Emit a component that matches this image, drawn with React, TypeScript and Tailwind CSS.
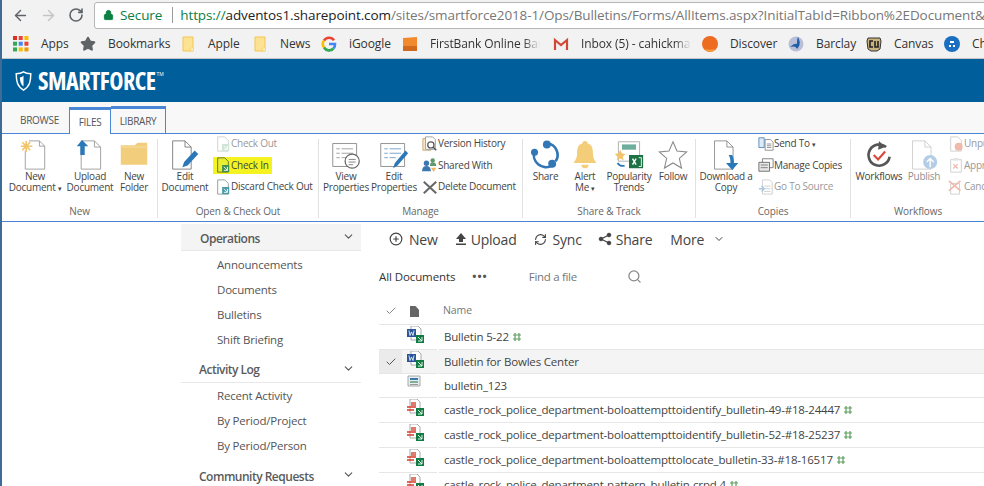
import { ArrowLeft, ArrowRight, ChevronDown, RotateCw, Lock, Star, Search, Check, CirclePlus, RefreshCw } from "lucide-react";

function BigIcon({ kind }: { kind: string }) {
  const box = "w-[30px] h-[30px]";
  switch (kind) {
    case "new":
      return (
        <svg viewBox="0 0 34 34" className={box} fill="none">
          <path d="M10 1h12l6 6v26H6V12" fill="#fff" stroke="#999" />
          <path d="M22 1v6h6" stroke="#999" />
          <path d="M7 1v13M1 7h13M2.5 2.5l9 9M11.5 2.5l-9 9" stroke="#f2c46d" strokeWidth="1.8" />
        </svg>
      );
    case "upload":
      return (
        <svg viewBox="0 0 34 34" className={box} fill="none">
          <path d="M7 1h15l7 7v25H7z" fill="#fff" stroke="#999" />
          <path d="M22 1v7h7" stroke="#999" />
          <path d="M7 0l-6 7h4v10h5V7h4z" transform="translate(1 0)" fill="#2b78b8" />
        </svg>
      );
    case "folder":
      return (
        <svg viewBox="0 0 34 34" className={box}>
          <path d="M2 6h16l3-3h11v25H2z" fill="#f2cd7c" />
          <path d="M2 8h30" stroke="#f7e0a8" />
        </svg>
      );
    case "edit":
      return (
        <svg viewBox="0 0 34 34" className={box} fill="none">
          <path d="M3 1h14l7 7v25H3z" fill="#fff" stroke="#777" />
          <path d="M17 1v7h7" stroke="#777" />
          <path d="M14 31l2-6L28 12l4 4-12 13z" fill="#2b78b8" />
        </svg>
      );
    case "view":
    case "editp":
      return (
        <svg viewBox="0 0 34 34" className={box} fill="none">
          <path d="M2 4h27v26H2z" fill="#fff" stroke="#888" />
          <path d="M6 10h4M12 10h13M6 15h4M12 15h13M6 20h4M12 20h7" stroke={kind === "view" ? "#9a9a9a" : "#6d9bc8"} />
          {kind === "view" ? (
            <>
              <circle cx="24" cy="24" r="8" fill="#fff" stroke="#666" strokeWidth="1.4" />
              <path d="M20 22h8M20 25h8M20 28h5" stroke="#777" />
            </>
          ) : (
            <path d="M16 32l2-6L30 12l3 3-12 14z" fill="#2b78b8" />
          )}
        </svg>
      );
    case "share":
      return (
        <svg viewBox="0 0 34 34" className={box} fill="none">
          <path d="M19 4A13 13 0 0 1 28 24M24 29A14 14 0 0 1 4 12" stroke="#3276b5" strokeWidth="3" />
          <circle cx="18" cy="5" r="4.5" fill="#3276b5" />
          <circle cx="24" cy="27" r="4.5" fill="#3276b5" />
          <circle cx="4" cy="14" r="4" fill="#3276b5" />
        </svg>
      );
    case "bell":
      return (
        <svg viewBox="0 0 34 34" className={box}>
          <path d="M17 1c2 0 3 1 3 3 5 1 6 6 6 11 0 6 2 8 4 11H4c2-3 4-5 4-11 0-5 1-10 6-11 0-2 1-3 3-3z" fill="#f3cd78" />
          <path d="M13 28h8a4 4 0 0 1-8 0z" fill="#f3cd78" />
        </svg>
      );
    case "trends":
      return (
        <svg viewBox="0 0 34 34" className={box} fill="none">
          <path d="M5 2h24v22H5z" fill="#fff" stroke="#aaa" />
          <path d="M9 5h16v6H9z" fill="#6fae9c" />
          <path d="M7 11l2 4 4 1-3 3 1 4-4-2-4 2 1-4-3-3 4-1z" fill="#f2c46d" />
          <path d="M4 26c2 3 5 4 8 3" stroke="#2b78b8" strokeWidth="2" />
          <path d="M17 17h16v15H17z" fill="#1e7145" />
          <path d="M21 21l4 7M25 21l-4 7" stroke="#fff" strokeWidth="1.6" />
          <path d="M28 20h3v10h-3" stroke="#fff" />
        </svg>
      );
    case "follow":
      return (
        <svg viewBox="0 0 34 34" className={box} fill="#fff" stroke="#8a8a8a" strokeWidth="1.2">
          <path d="M17 2l4.5 10.5 11 1-8.300 7.300 2.500 11L17 26l-9.700 5.800 2.500-11L1.500 13.500l11-1z" />
        </svg>
      );
    case "download":
      return (
        <svg viewBox="0 0 34 34" className={box} fill="none">
          <path d="M4 1h14l7 7v25H4z" fill="#fff" stroke="#8a8a8a" />
          <path d="M18 1v7h7" stroke="#8a8a8a" />
          <path d="M20 17h4c2 4 2 7 2 9h5l-7 8-7-8h5c0-3 0-6-2-9z" fill="#2b78b8" />
        </svg>
      );
    case "workflows":
      return (
        <svg viewBox="0 0 34 34" className={box} fill="none">
          <path d="M25 8A12 12 0 1 0 29 19" stroke="#555" strokeWidth="3" />
          <path d="M17 1l7 7-8 3z" fill="#555" />
          <path d="M11 17l5 5 8-9" stroke="#d9483b" strokeWidth="2.4" />
        </svg>
      );
    default:
      return (
        <svg viewBox="0 0 34 34" className={box} fill="none">
          <path d="M4 1h14l7 7v25H4z" fill="#fff" stroke="#ccc" />
          <path d="M18 1v7h7" stroke="#ccc" />
          <circle cx="24" cy="25" r="8" fill="#b4cde6" />
          <path d="M24 31v-9M20 25l4-4 4 4" stroke="#fff" strokeWidth="1.6" />
        </svg>
      );
  }
}

function SmallIcon({ kind }: { kind: string }) {
  const box = "w-[16px] h-[16px] shrink-0";
  const green = "#3f8f52";
  switch (kind) {
    case "out":
    case "in":
    case "discard":
      return (
        <svg viewBox="0 0 18 18" className={box} fill="none">
          <path d="M3 1h8l4 4v12H3z" fill={kind === "in" ? "#e8ee30" : "#fff"} stroke={kind === "out" ? "#c9d2cc" : kind === "in" ? "#5d6b22" : "#8a9a9a"} />
          <path d="M8 9h8v8H8z" fill={kind === "out" ? "#cfe3d6" : kind === "in" ? green : "#4a9aa6"} />
          <path d="M10 11l4 4M14 11v4h-4" stroke="#fff" />
        </svg>
      );
    case "version":
      return (
        <svg viewBox="0 0 18 18" className={box} fill="none">
          <path d="M1 3h9v13H1z" fill="#f6e6c8" stroke="#c6a873" />
          <path d="M4 1h8l3 3v11H4z" fill="#fff" stroke="#999" />
          <circle cx="10" cy="10" r="3.5" stroke="#555" strokeWidth="1.4" />
          <path d="M12.500 12.500L16 16" stroke="#555" strokeWidth="1.6" />
        </svg>
      );
    case "shared":
      return (
        <svg viewBox="0 0 18 18" className={box}>
          <circle cx="5" cy="7" r="3" fill="#3d77b0" />
          <path d="M0 16c0-4 2-6 5-6s5 2 5 6z" fill="#3d77b0" />
          <circle cx="12" cy="4" r="2.5" fill="#5f9a6d" />
          <path d="M9 10c0-3 1-4 3-4s4 1 4 4z" fill="#5f9a6d" />
          <path d="M10 12h6l-3 5z" fill="#f0b760" />
        </svg>
      );
    case "delete":
      return (
        <svg viewBox="0 0 18 18" className={box}>
          <path d="M2 3l14 13M16 3L2 16" stroke="#666" strokeWidth="2.2" />
        </svg>
      );
    case "send":
      return (
        <svg viewBox="0 0 18 18" className={box} fill="none">
          <path d="M1 2h6v11H1z" fill="#dfeaf5" stroke="#4f87bd" />
          <path d="M8 4h6l3 3v9H8z" fill="#fff" stroke="#888" />
          <path d="M10 9h5M10 11h5M10 13h5" stroke="#888" />
        </svg>
      );
    case "manage":
      return (
        <svg viewBox="0 0 18 18" className={box} fill="none">
          <path d="M5 2h12v10H5z" fill="#fff" stroke="#777" />
          <path d="M1 6h12v10H1z" fill="#e7e7e7" stroke="#666" />
          <path d="M3 9h8M3 12h8" stroke="#777" />
        </svg>
      );
    case "source":
      return (
        <svg viewBox="0 0 18 18" className={box} fill="none">
          <path d="M5 1h8l3 3v13H5z" fill="#fff" stroke="#ccc" />
          <path d="M7 8h7M7 11h7M7 14h7" stroke="#ccc" />
          <path d="M1 11h5M4 8l3 3-3 3" stroke="#a9c6e2" strokeWidth="1.6" />
        </svg>
      );
    case "unpublish":
      return (
        <svg viewBox="0 0 18 18" className={box} fill="none">
          <path d="M3 1h8l4 4v12H3z" fill="#fff" stroke="#ccc" />
          <circle cx="12" cy="12" r="4.5" fill="#efb9ab" />
        </svg>
      );
    case "approve":
      return (
        <svg viewBox="0 0 18 18" className={box} fill="none">
          <path d="M3 3h12v14H3z" fill="#fff" stroke="#ccc" />
          <path d="M6 1h6v3H6z" fill="#e4e4e4" />
          <path d="M6 8l5 5M11 8l-5 5" stroke="#efb9ab" strokeWidth="1.4" />
        </svg>
      );
    default:
      return (
        <svg viewBox="0 0 18 18" className={box} fill="none">
          <path d="M3 5h10v12H3z" fill="#fff" stroke="#ccc" />
          <path d="M1 2l13 11M14 2L1 13" stroke="#efb9ab" strokeWidth="1.8" />
        </svg>
      );
  }
}

function BigButton({ icon, lines, w, dim, caret }: { icon: string; lines: string[]; w: string; dim?: boolean; caret?: boolean }) {
  return (
    <div className={`${w} shrink-0 flex flex-col items-center pt-[6px] text-[10px] leading-[10.5px] tracking-[-0.25px] ${dim ? "text-[#8f8f8f]" : "text-[#444]"}`}>
      <div className="h-[31px] flex items-start justify-center"><BigIcon kind={icon} /></div>
      {lines.map((l, i) => (
        <span key={l} className="whitespace-nowrap">
          {l}
          {caret && i === lines.length - 1 ? <span className="text-[7px] ml-[2px]">▾</span> : null}
        </span>
      ))}
    </div>
  );
}

function SmallButton({ icon, label, dim, highlight, caret }: { icon: string; label: string; dim?: boolean; highlight?: boolean; caret?: boolean }) {
  return (
    <div className={`h-[21.5px] flex items-center text-[10px] tracking-[-0.25px] whitespace-nowrap ${dim ? "text-[#999]" : "text-[#444]"}`}>
      <div className={`flex items-center h-[17px] pl-[2px] pr-[3px] ${highlight ? "bg-[#f4f320]" : ""}`}>
        <SmallIcon kind={icon} />
        <span>{label}{caret ? <span className="text-[7px] ml-[2px]">▾</span> : null}</span>
      </div>
    </div>
  );
}

function Group({ w, label, border = true, children }: { w: string; label: string; border?: boolean; children: React.ReactNode }) {
  return (
    <>
      <div className={`${w} shrink-0 flex flex-col h-[84px]`}>
        <div className="flex-1 flex min-w-0">{children}</div>
        <div className="h-[13px] text-center text-[10px] tracking-[-0.1px] leading-[13px] text-[#666] whitespace-nowrap">{label}</div>
      </div>
      {border ? <div className="w-px h-[79px] mt-[5px] shrink-0 bg-[#e1e1e1]" /> : null}
    </>
  );
}

const bookmarks = [
  { w: "w-[67px]", label: "Apps", icon: "apps" },
  { w: "w-[100px]", label: "Bookmarks", icon: "star" },
  { w: "w-[72px]", label: "Apple", icon: "folder" },
  { w: "w-[69px]", label: "News", icon: "folder" },
  { w: "w-[81px]", label: "iGoogle", icon: "g" },
  { w: "w-[151px]", label: "FirstBank Online Banking", icon: "bank", fade: true },
  { w: "w-[149px]", label: "Inbox (5) - cahickman@gmail", icon: "gmail", fade: true },
  { w: "w-[86px]", label: "Discover", icon: "discover" },
  { w: "w-[78px]", label: "Barclay", icon: "barclay" },
  { w: "w-[78px]", label: "Canvas", icon: "cu" },
  { w: "w-[40px]", label: "Chase", icon: "chase" },
];

function BookmarkIcon({ kind }: { kind: string }) {
  const box = "w-[16px] h-[16px] shrink-0";
  if (kind === "apps")
    return (
      <svg viewBox="0 0 14 14" className={box}>
        {[
          ["#d93025", 0, 0], ["#ea4335", 5, 0], ["#fbbc04", 10, 0],
          ["#34a853", 0, 5], ["#4285f4", 5, 5], ["#ea4335", 10, 5],
          ["#34a853", 0, 10], ["#fbbc04", 5, 10], ["#f29900", 10, 10],
        ].map(([c, x, y]) => (
          <rect key={`${x}-${y}`} x={x as number} y={y as number} width="3.5" height="3.5" fill={c as string} />
        ))}
      </svg>
    );
  if (kind === "star") return <Star className={box} fill="#5f6368" stroke="#5f6368" />;
  if (kind === "folder")
    return (
      <svg viewBox="0 0 16 16" className={box}>
        <path d="M3 1h10v14H3z" fill="#fde293" stroke="#f3c74f" />
        <path d="M11 12h2v3h-2z" fill="#fff" stroke="#f3c74f" strokeWidth="0.6" />
      </svg>
    );
  if (kind === "g")
    return (
      <svg viewBox="0 0 16 16" className={box} fill="none" strokeWidth="2.6">
        <path d="M13 4.300A6 6 0 0 0 3 4.500" stroke="#ea4335" />
        <path d="M3 4.500a6 6 0 0 0 0 7" stroke="#fbbc04" />
        <path d="M3 11.500a6 6 0 0 0 9.500 1" stroke="#34a853" />
        <path d="M12.500 12.500A6 6 0 0 0 14 8H8" stroke="#4285f4" />
      </svg>
    );
  if (kind === "bank")
    return (
      <svg viewBox="0 0 16 16" className={box}>
        <path d="M1 2l14-1v14H1z" fill="#f08a2c" />
        <path d="M1 10h14v5H1z" fill="#cf6a1d" />
      </svg>
    );
  if (kind === "gmail")
    return (
      <svg viewBox="0 0 16 16" className={box} fill="none">
        <path d="M1 3h14v11H1z" fill="#f1f1f1" />
        <path d="M2 14V4l6 5 6-5v10" stroke="#d14836" strokeWidth="2.2" />
      </svg>
    );
  if (kind === "discover")
    return (
      <svg viewBox="0 0 16 16" className={box}>
        <circle cx="8" cy="8" r="8" fill="#ee6c22" />
        <path d="M2 13a8 8 0 0 0 12 0c-4 1-8 1-12 0z" fill="#f9a03f" />
      </svg>
    );
  if (kind === "barclay")
    return (
      <svg viewBox="0 0 16 16" className={box}>
        <circle cx="8" cy="8" r="7.5" fill="#b9bfd6" />
        <path d="M10 1c2 4 3 8-1 12-1-3-4-3-7-2 3-3 6-4 7-3 0-3 0-5 1-7z" fill="#1f5fa8" />
      </svg>
    );
  if (kind === "cu")
    return (
      <svg viewBox="0 0 16 16" className={box}>
        <path d="M2 2h12l1 3-1 8-3 2H5l-3-2-1-8z" fill="#c9b37c" stroke="#333" />
        <path d="M7 5H4v6h3M9 5v6h3V5" fill="none" stroke="#222" strokeWidth="1.6" />
      </svg>
    );
  return (
    <svg viewBox="0 0 16 16" className={box}>
      <circle cx="8" cy="8" r="8" fill="#1a6fc0" />
      <path d="M6 5h4v2H6zM5 9h2v2H5zM9 9h2v2H9z" fill="#fff" />
    </svg>
  );
}

function FileIcon({ kind, check }: { kind: string; check: boolean }) {
  return (
    <svg viewBox="0 0 17 17" className="w-[17px] h-[17px]" fill="none">
      {kind === "word" && (
        <>
          <path d="M4 0h7l3 3v11H4z" fill="#fff" stroke="#aaa" />
          <path d="M0 3h9v8H0z" fill="#2a5699" />
          <path d="M2 4.500l1 5 1.500-3.500 1.500 3.500 1-5" stroke="#fff" strokeWidth="0.8" />
        </>
      )}
      {kind === "image" && (
        <>
          <path d="M1 1h12v10H1z" fill="#e6eef2" stroke="#a8a8a8" />
          <path d="M3 3h8v2H3z" fill="#3d77b0" />
          <path d="M3 6h8v2H3z" fill="#7fb08f" />
          <path d="M3 9h8v1H3z" fill="#999" />
        </>
      )}
      {kind === "pdf" && (
        <>
          <path d="M3 0h7l3 3v11H3z" fill="#fff" stroke="#aaa" />
          <path d="M4 3h5v4H4z" fill="#e07a6c" />
          <path d="M0 8h9M0 11h7" stroke="#d8382a" strokeWidth="1.6" />
        </>
      )}
      {check && (
        <>
          <path d="M9 9h8v8H9z" fill="#107c41" />
          <path d="M11 11l4 4M15 11v4h-4" stroke="#fff" strokeWidth="0.9" />
        </>
      )}
    </svg>
  );
}

function NewMark() {
  return (
    <svg viewBox="0 0 8 8" className="ml-[4px] w-[8px] h-[8px]" fill="none" stroke="#5f9e5f" strokeWidth="1.2">
      <path d="M2 0v8M6 0v8M0 2h8M0 6h8" />
      <path d="M3 3h2v2H3z" fill="#fff" stroke="none" />
    </svg>
  );
}

const rows = [
  { h: "h-[25px]", icon: "word", check: true, name: "Bulletin 5-22", isNew: true },
  { h: "h-[24px]", icon: "word", check: true, name: "Bulletin for Bowles Center", selected: true },
  { h: "h-[24px]", icon: "image", check: false, name: "bulletin_123" },
  { h: "h-[25px]", icon: "pdf", check: true, name: "castle_rock_police_department-boloattempttoidentify_bulletin-49-#18-24447", isNew: true },
  { h: "h-[25px]", icon: "pdf", check: true, name: "castle_rock_police_department-boloattempttoidentify_bulletin-52-#18-25237", isNew: true },
  { h: "h-[25px]", icon: "pdf", check: true, name: "castle_rock_police_department-boloattempttolocate_bulletin-33-#18-16517", isNew: true },
  { h: "h-[25px]", icon: "pdf", check: true, name: "castle_rock_police_department-pattern_bulletin-crpd 4", isNew: true },
];

const nav = [
  { title: "Operations", active: true, items: ["Announcements", "Documents", "Bulletins", "Shift Briefing"] },
  { title: "Activity Log", items: ["Recent Activity", "By Period/Project", "By Period/Person"] },
  { title: "Community Requests", items: [] },
];

export default function App() {
  return (
    <div className="w-[984px] h-[486px] overflow-hidden bg-white border-l-2 border-[#3f6c96] font-['Open_Sans','Noto_Sans',sans-serif]">
      {/* browser chrome */}
      <div className="h-[30px] bg-[#f2f2f2] flex items-center overflow-hidden">
        <ArrowLeft className="w-[17px] h-[17px] shrink-0 ml-[10px] text-[#5f6368]" strokeWidth={2} />
        <ArrowRight className="w-[17px] h-[17px] shrink-0 ml-[11px] text-[#c4c4c4]" strokeWidth={2} />
        <RotateCw className="w-[16px] h-[16px] shrink-0 ml-[11px] text-[#5f6368]" strokeWidth={2.4} />
        <div className="ml-[10px] w-[900px] shrink-0 h-[27px] bg-white border border-[#b5b5b5] rounded-[3px] flex items-center whitespace-nowrap overflow-hidden text-[13.5px] tracking-[-0.1px]">
          <Lock className="w-[11px] h-[12px] shrink-0 ml-[8px] text-[#0b8043]" fill="#0b8043" strokeWidth={2} />
          <span className="ml-[6px] text-[#0b8043]">Secure</span>
          <span className="ml-[10px] w-px h-[16px] shrink-0 bg-[#9a9a9a]" />
          <span className="ml-[7px] text-[#0b8043]">https://</span>
          <span className="text-[#222]">adventos1.sharepoint.com</span>
          <span className="text-[#777]">/sites/smartforce2018-1/Ops/Bulletins/Forms/AllItems.aspx?InitialTabId=Ribbon%2EDocument&amp;VisibilityContext</span>
        </div>
      </div>
      <div className="h-[29px] bg-[#f2f2f2] border-b border-[#c4c4c4] flex items-center pl-[11px] text-[12px] tracking-[-0.1px] text-[#333] whitespace-nowrap overflow-hidden">
        {bookmarks.map((b) => (
          <div key={b.label} className={`${b.w} shrink-0 flex items-center gap-[12px] overflow-hidden`}>
            <BookmarkIcon kind={b.icon} />
            <span className={b.fade ? "w-[110px] overflow-hidden [mask-image:linear-gradient(to_right,black_85%,transparent)]" : ""}>{b.label}</span>
          </div>
        ))}
      </div>

      {/* suite bar */}
      <div className="h-[43px] bg-[#005e9b] flex items-center pl-[13px] text-white">
        <svg viewBox="0 0 18 22" className="w-[17px] h-[20px]" fill="none">
          <path d="M9 1c3 2 5 2 8 2 0 8-1 14-8 18C2 17 1 11 1 3c3 0 5 0 8-2z" stroke="#fff" strokeWidth="1.6" />
          <path d="M9 5v12c-3-2-4-6-4-10 2 0 3-1 4-2z" fill="#fff" />
        </svg>
        <span className="ml-[6px] text-[24px] font-bold leading-none tracking-[-0.5px] [font-stretch:75%]">SMARTFORCE</span>
        <span className="text-[5px] self-start mt-[12px] ml-[1px]">TM</span>
      </div>

      {/* ribbon tabs */}
      <div className="h-[32px] bg-[#f8f8f8] flex items-end pl-[18px] text-[10px] tracking-[-0.3px] text-[#555] border-b border-[#4a86d6]">
        <div className="w-[49px] h-[26px] pt-[1px] flex items-center">BROWSE</div>
        <div className="w-[42px] h-[27px] pt-[1px] -mb-px bg-white border-x border-t-[3px] border-[#4a86d6] flex items-center justify-center">FILES</div>
        <div className="w-[55px] h-[27px] pt-[1px] border-r border-t-[3px] border-[#4a86d6] flex items-center justify-center">LIBRARY</div>
      </div>

      {/* ribbon */}
      <div className="h-[88px] bg-white border-b border-[#4a86d6] flex items-start overflow-hidden">
        <Group w="w-[155px]" label="New">
          <BigButton icon="new" w="w-[54px] ml-[6px]" lines={["New", "Document"]} caret />
          <BigButton icon="upload" w="w-[56px]" lines={["Upload", "Document"]} />
          <BigButton icon="folder" w="w-[32px]" lines={["New", "Folder"]} />
        </Group>
        <Group w="w-[160px]" label="Open & Check Out">
          <BigButton icon="edit" w="w-[54px]" lines={["Edit", "Document"]} />
          <div className="flex flex-col -mt-[1px] ml-[1px]">
            <SmallButton icon="out" label="Check Out" dim />
            <SmallButton icon="in" label="Check In" highlight />
            <SmallButton icon="discard" label="Discard Check Out" />
          </div>
        </Group>
        <Group w="w-[203px]" label="Manage">
          <BigButton icon="view" w="w-[44px] ml-[5px]" lines={["View", "Properties"]} />
          <BigButton icon="editp" w="w-[42px] ml-[5px]" lines={["Edit", "Properties"]} />
          <div className="flex flex-col -mt-[1px] ml-[5px]">
            <SmallButton icon="version" label="Version History" />
            <SmallButton icon="shared" label="Shared With" />
            <SmallButton icon="delete" label="Delete Document" />
          </div>
        </Group>
        <Group w="w-[172px]" label="Share & Track">
          <BigButton icon="share" w="w-[45px]" lines={["Share"]} />
          <BigButton icon="bell" w="w-[34px]" lines={["Alert", "Me"]} caret />
          <BigButton icon="trends" w="w-[54px]" lines={["Popularity", "Trends"]} />
          <BigButton icon="follow" w="w-[34px]" lines={["Follow"]} />
        </Group>
        <Group w="w-[154px]" label="Copies">
          <BigButton icon="download" w="w-[60px]" lines={["Download a", "Copy"]} />
          <div className="flex flex-col -mt-[1px]">
            <SmallButton icon="send" label="Send To" caret />
            <SmallButton icon="manage" label="Manage Copies" />
            <SmallButton icon="source" label="Go To Source" dim />
          </div>
        </Group>
        <Group w="w-[134px]" label="Workflows" border={false}>
          <BigButton icon="workflows" w="w-[56px]" lines={["Workflows"]} />
          <BigButton icon="publish" w="w-[34px]" lines={["Publish"]} dim />
          <div className="flex flex-col -mt-[1px] ml-[5px]">
            <SmallButton icon="unpublish" label="Unpublish" dim />
            <SmallButton icon="approve" label="Approve/Reject" dim />
            <SmallButton icon="cancel" label="Cancel Approval" dim />
          </div>
        </Group>
      </div>

      {/* page body */}
      <div className="flex pl-[179px] pt-[2px] items-start">
        <nav className="w-[180px] shrink-0 text-[#555]">
          {nav.map((n) => (
            <div key={n.title} className="mb-[3.5px]">
              <div className={`h-[27px] pt-[3px] flex items-center justify-between pr-[6px] border-b ${n.items.length ? "border-[#e8e8e8]" : "border-transparent"} ${n.active ? "bg-[#f4f4f4] pl-[19px]" : "pl-[18px]"} text-[12px] font-semibold tracking-[-0.5px] text-[#5a5a5a]`}>
                <span>{n.title}</span>
                <ChevronDown className="w-[13px] h-[13px] -mt-[4px] text-[#555]" />
              </div>
              <div className="pt-[1px]">
                {n.items.map((item) => (
                  <div key={item} className="h-[25px] flex items-center pl-[36px] text-[11.5px] tracking-[-0.2px]">{item}</div>
                ))}
              </div>
            </div>
          ))}
        </nav>

        <main className="ml-[18px] flex-1 min-w-0">
          <div className="h-[28px] mt-[1px] flex items-center text-[14px] tracking-[-0.2px] text-[#444] pl-[10px]">
            <CirclePlus className="w-[14px] h-[14px]" />
            <span className="ml-[6px]">New</span>
            <svg viewBox="0 0 14 14" className="ml-[16px] w-[14px] h-[14px]" fill="#444">
              <path d="M7 1L2 7h3v3h4V7h3zM2 11.5h10V13H2z" />
            </svg>
            <span className="ml-[3px]">Upload</span>
            <RefreshCw className="w-[13px] h-[13px] ml-[17px]" />
            <span className="ml-[6px]">Sync</span>
            <svg viewBox="0 0 14 14" className="ml-[16px] w-[14px] h-[14px]" fill="#444" stroke="#444">
              <path d="M11 3L3 7l8 4" fill="none" strokeWidth="1.2" />
              <circle cx="11" cy="3" r="1.8" />
              <circle cx="3" cy="7" r="1.8" />
              <circle cx="11" cy="11" r="1.8" />
            </svg>
            <span className="ml-[4px]">Share</span>
            <span className="ml-[18px]">More</span>
            <ChevronDown className="w-[12px] h-[12px] ml-[9px]" />
          </div>
          <div className="h-[33px] mt-[7px] flex items-center text-[11.5px]">
            <span className="font-medium tracking-[-0.1px] text-[#333]">All Documents</span>
            <span className="ml-[17px] text-[11px] font-bold tracking-[1px] text-[#555]">•••</span>
            <span className="ml-[41px] tracking-[-0.3px] text-[#777]">Find a file</span>
            <Search className="w-[15px] h-[15px] ml-[50px] text-[#888]" />
          </div>
          <div className="h-[32px] pt-[5px] flex items-center border-b border-[#e6e6e6]">
            <div className="w-[23px] flex justify-center"><Check className="w-[12px] h-[12px] text-[#888]" /></div>
            <svg viewBox="0 0 10 12" className="ml-[8px] w-[9px] h-[11px]"><path d="M0 0h6l4 4v8H0z" fill="#666" /></svg>
            <span className="ml-[24px] text-[10.5px] tracking-[-0.1px] text-[#777]">Name</span>
          </div>
          {rows.map((r) => (
            <div key={r.name} className={`${r.h} flex ${r.selected ? "bg-[#f4f4f4]" : ""} text-[11.5px] tracking-[-0.18px] text-[#444] whitespace-nowrap`}>
              <div className={`w-[23px] flex items-center justify-center border-b border-[#e6e6e6] ${r.selected ? "bg-[#ebebeb]" : ""}`}>
                {r.selected ? <Check className="w-[12px] h-[12px] text-[#555]" /> : null}
              </div>
              <div className="w-[35px] pl-[5px] pt-[1px] border-b border-[#e6e6e6]"><FileIcon kind={r.icon} check={r.check} /></div>
              <div className="flex-1 ml-[2px] pl-[5px] flex items-center border-b border-[#e6e6e6]">
                <span>{r.name}</span>
                {r.isNew ? <NewMark /> : null}
              </div>
            </div>
          ))}
        </main>
      </div>
    </div>
  );
}
